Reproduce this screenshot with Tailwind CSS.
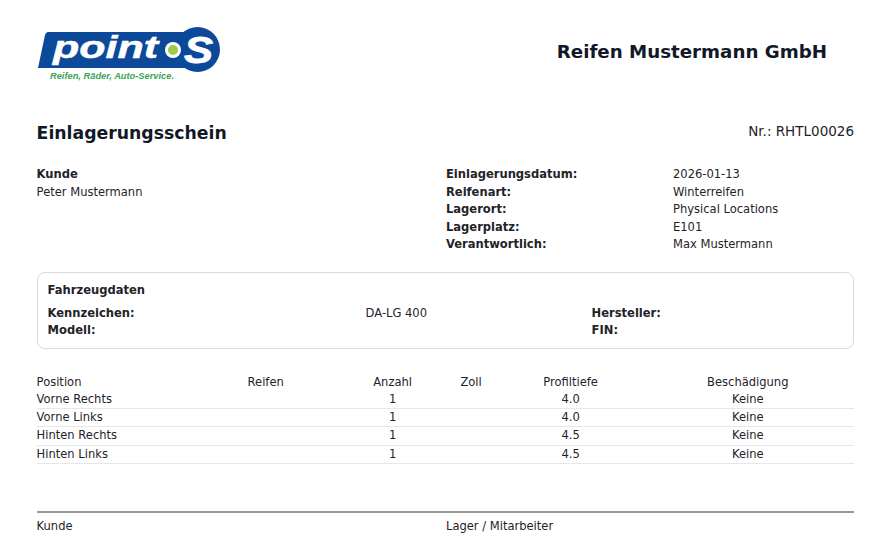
<!DOCTYPE html>
<html lang="de">
<head>
    <meta charset="UTF-8">
    <title>Einlagerungsschein</title>
    <script src="https://cdn.jsdelivr.net/npm/@tailwindcss/browser@4"></script>
</head>
<body class="bg-white text-[#1f2329] font-['DejaVu_Sans',sans-serif] text-[11.52px] leading-[17.6px]">
    <div class="w-[877px] h-[556px] overflow-hidden pl-[36.6px] pr-[23px]">
        <!-- Header -->
        <div class="flex justify-between pt-[25px] h-[122px]">
            <svg class="w-[190px] h-[60px]" viewBox="0 0 190 60">
                <path d="M11 7 H152 V43 H1 L8 10 Q9 7 11 7 Z" fill="#0c4a99"/>
                <circle cx="160.5" cy="24.5" r="22.5" fill="#0c4a99"/>
                <circle cx="136" cy="25" r="8" fill="#fff"/>
                <circle cx="136" cy="25" r="5" fill="#9ccb4a"/>
                <text x="16" y="33" font-family="Liberation Sans" font-style="italic" font-weight="700" font-size="32" fill="#fff" stroke="#fff" stroke-width="0.5" textLength="105" lengthAdjust="spacingAndGlyphs">point</text>
                <text x="147" y="38" font-family="Liberation Sans" font-style="italic" font-weight="700" font-size="37" fill="#fff" stroke="#fff" stroke-width="0.8" textLength="29" lengthAdjust="spacingAndGlyphs">S</text>
                <text x="13" y="54" font-family="Liberation Sans" font-style="italic" font-weight="700" font-size="9" fill="#3aa655" textLength="124" lengthAdjust="spacingAndGlyphs">Reifen, Räder, Auto-Service.</text>
            </svg>
            <div class="font-bold text-[18.24px] leading-[24px] mt-[15px] mr-[27px] text-[#111827]">Reifen Mustermann GmbH</div>
        </div>

        <!-- Title -->
        <div class="flex justify-between h-[43px]">
            <h1 class="font-bold text-[17.28px] leading-[24px] -mt-[1px] text-[#111827]">Einlagerungsschein</h1>
            <div class="text-[13.5px] leading-[16px] mt-[1px]">Nr.: RHTL00026</div>
        </div>

        <!-- Customer and storage -->
        <div class="grid grid-cols-[409.4px_227px_1fr] h-[107px] pt-[1px]">
            <div>
                <div class="font-bold">Kunde</div>
                <div>Peter Mustermann</div>
            </div>
            <div class="font-bold">
                <div>Einlagerungsdatum:</div>
                <div>Reifenart:</div>
                <div>Lagerort:</div>
                <div>Lagerplatz:</div>
                <div>Verantwortlich:</div>
            </div>
            <div>
                <div>2026-01-13</div>
                <div>Winterreifen</div>
                <div>Physical Locations</div>
                <div>E101</div>
                <div>Max Mustermann</div>
            </div>
        </div>

        <!-- Vehicle -->
        <div class="border border-[#d9dadc] rounded-[8px] h-[77px] px-[10px] pt-[9px]">
            <div class="font-bold mb-[5px]">Fahrzeugdaten</div>
            <div class="grid grid-cols-[318px_226px_1fr]">
                <div class="font-bold">Kennzeichen:</div>
                <div>DA-LG 400</div>
                <div class="font-bold">Hersteller:</div>
                <div class="font-bold">Modell:</div>
                <div></div>
                <div class="font-bold">FIN:</div>
            </div>
        </div>

        <!-- Tires -->
        <table class="w-[817.4px] table-fixed mt-[24.6px] leading-[17.3px]">
            <colgroup>
                <col class="w-[211px]"><col class="w-[95px]"><col class="w-[100px]"><col class="w-[57px]"><col class="w-[142px]"><col class="w-[212.4px]">
            </colgroup>
            <thead>
                <tr>
                    <th class="font-normal text-left">Position</th>
                    <th class="font-normal text-left">Reifen</th>
                    <th class="font-normal">Anzahl</th>
                    <th class="font-normal">Zoll</th>
                    <th class="font-normal">Profiltiefe</th>
                    <th class="font-normal">Beschädigung</th>
                </tr>
            </thead>
            <tbody class="text-center">
                <tr class="border-b border-[#e5e7eb]"><td class="text-left">Vorne Rechts</td><td></td><td>1</td><td></td><td>4.0</td><td>Keine</td></tr>
                <tr class="border-b border-[#e5e7eb]"><td class="text-left">Vorne Links</td><td></td><td>1</td><td></td><td>4.0</td><td>Keine</td></tr>
                <tr class="border-b border-[#e5e7eb]"><td class="text-left">Hinten Rechts</td><td></td><td>1</td><td></td><td>4.5</td><td>Keine</td></tr>
                <tr class="border-b border-[#e5e7eb]"><td class="text-left">Hinten Links</td><td></td><td>1</td><td></td><td>4.5</td><td>Keine</td></tr>
            </tbody>
        </table>

        <!-- Signatures -->
        <div class="mt-[47.4px] border-t-2 border-[#999] pt-[5px] grid grid-cols-[409.4px_1fr]">
            <div>Kunde</div>
            <div>Lager / Mitarbeiter</div>
        </div>
    </div>
</body>
</html>
